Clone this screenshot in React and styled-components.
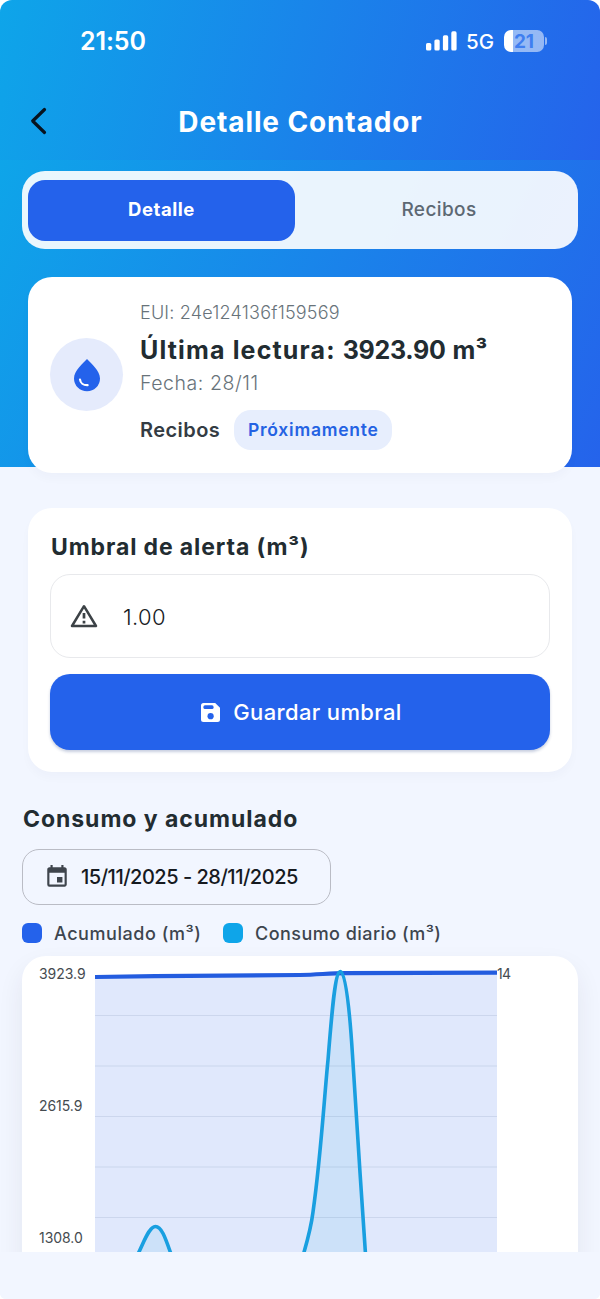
import React, { useState } from "react";
import styled, { createGlobalStyle } from "styled-components";
import { MdEvent } from "react-icons/md";

const GlobalStyle = createGlobalStyle`
  * {
    box-sizing: border-box;
  }
  body {
    margin: 0;
    background: #fff;
    font-family: Inter, "Open Sans", sans-serif;
  }
  button {
    font-family: inherit;
    cursor: pointer;
  }
`;
const Screen = styled.main`
  display: flex;
  flex-direction: column;
  width: 600px;
  height: 1299px;
  margin: 0 auto;
  border-radius: 12px 12px 6px 6px;
  background: #f2f6ff;
  overflow: hidden;
`;
const Header = styled.header`
  flex: none;
  height: 160px;
  background: linear-gradient(105deg, #0ea5e9 0%, #2563eb 100%);
`;
const StatusBar = styled.div`
  display: flex;
  align-items: center;
  height: 82px;
  padding: 0 53px 0 80px;
  color: #fff;
`;
const Time = styled.span`
  flex: 1;
  font-size: 25px;
  font-weight: 600;
  letter-spacing: -0.1px;
`;
const Signal = styled.svg`
  width: 31px;
  height: 20px;
  fill: #fff;
`;
const Network = styled.span`
  margin: 1px 10px 0 9px;
  font-size: 20.5px;
  font-weight: 500;
`;
const Battery = styled.div`
  display: flex;
  align-items: center;
  justify-content: center;
  width: 40px;
  height: 22px;
  border-radius: 7px;
  background: linear-gradient(
    90deg,
    #fff 9px,
    rgba(255, 255, 255, 0.52) 9px
  );
  color: #3f7ff0;
  font-size: 19px;
  font-weight: 700;
`;
const BatteryTip = styled.div`
  width: 2px;
  height: 8px;
  margin-left: 1px;
  border-radius: 0 3px 3px 0;
  background: rgba(255, 255, 255, 0.52);
`;
const TitleBar = styled.div`
  display: grid;
  grid-template-columns: 60px 1fr 60px;
  align-items: center;
  height: 78px;
`;
const Back = styled.button`
  display: flex;
  width: 18px;
  height: 28px;
  margin-left: 30px;
  padding: 0;
  border: 0;
  background: none;
  svg {
    width: 18px;
    height: 28px;
    fill: none;
    stroke: #07131f;
    stroke-width: 3.2;
    stroke-linecap: round;
    stroke-linejoin: round;
  }
`;
const Title = styled.h1`
  margin: 0;
  padding: 2px 0 0 1px;
  color: #fff;
  font-size: 28px;
  font-weight: 700;
  line-height: 40px;
  letter-spacing: 0.88px;
  text-align: center;
`;
const Body = styled.div`
  flex: 1;
  min-height: 0;
  overflow: hidden;
`;
const Hero = styled.section`
  height: 307px;
  padding: 11px 22px 0;
  background: linear-gradient(117deg, #0ea5e9 0%, #2563eb 100%);
`;
const Tabs = styled.div`
  display: flex;
  height: 78px;
  padding: 9px 6px 8px;
  border-radius: 23px;
  background: rgba(255, 255, 255, 0.91);
`;
const Tab = styled.button`
  flex: ${props => (props.$active ? "0 0 267px" : "1")};
  padding: ${props => (props.$active ? "0 0 3px" : "0 0 1px 11px")};
  border: 0;
  border-radius: 17px;
  background: ${props => (props.$active ? "#2462eb" : "transparent")};
  color: ${props => (props.$active ? "#fff" : "#5d6873")};
  font-size: ${props => (props.$active ? "18.5px" : "19px")};
  font-weight: ${props => (props.$active ? 700 : 500)};
  letter-spacing: ${props => (props.$active ? "0.55px" : "0.4px")};
  line-height: 24px;
`;
const Card = styled.section`
  margin: 0 28px;
  padding: 22px;
  border-radius: 24px;
  background: #fff;
  box-shadow: 0 6px 10px rgba(30, 40, 80, 0.025);
`;
const ReadingCard = styled(Card)`
  display: flex;
  height: 196px;
  margin: 28px 6px 0;
`;
const DropCircle = styled.div`
  display: flex;
  align-items: center;
  justify-content: center;
  flex: none;
  width: 73px;
  height: 73px;
  margin: 39px 17px 0 0;
  border-radius: 50%;
  background: #e5ebfc;
  svg {
    width: 28px;
    height: 34px;
  }
`;
const Info = styled.div`
  white-space: nowrap;
`;
const Eui = styled.div`
  color: #68737a;
  font-size: 18px;
  font-weight: 300;
  line-height: 27px;
  letter-spacing: 0.2px;
`;
const Reading = styled.div`
  padding-top: 1px;
  color: #222c31;
  font-size: 25px;
  font-weight: 700;
  line-height: 46px;
  letter-spacing: 1.15px;
`;
const Amount = styled.span`
  letter-spacing: -0.3px;
`;
const Unit = styled.span`
  letter-spacing: 0;
`;
const ReadingDate = styled.div`
  color: #68737a;
  font-size: 19.5px;
  font-weight: 300;
  line-height: 20px;
  letter-spacing: 0.55px;
`;
const Receipts = styled.div`
  display: flex;
  align-items: center;
  margin-top: 17px;
  color: #343c43;
  font-size: 20px;
  font-weight: 600;
  letter-spacing: 0.45px;
`;
const Badge = styled.span`
  width: 158px;
  margin-left: 14px;
  border-radius: 17px;
  background: #e7eefd;
  color: #2462e3;
  font-size: 17.5px;
  line-height: 40px;
  letter-spacing: 0.75px;
  text-align: center;
`;
const AlertCard = styled(Card)`
  margin-top: 41px;
`;
const Heading = styled.h2`
  margin: 0 0 0 1px;
  color: #222c31;
  font-size: 23px;
  font-weight: 700;
  line-height: 34px;
  letter-spacing: ${props => props.$spacing};
`;
const Field = styled.label`
  display: flex;
  align-items: center;
  height: 84px;
  margin-top: 10px;
  padding-left: 19px;
  border: 1px solid #e8e9ec;
  border-radius: 20px;
  svg {
    flex: none;
    width: 28px;
    height: 24px;
  }
`;
const Input = styled.input`
  width: 300px;
  margin-left: 25px;
  padding: 1px 0 0;
  border: 0;
  outline: 0;
  background: none;
  color: #161a1d;
  font-family: inherit;
  font-size: 22px;
  font-weight: 300;
  letter-spacing: 0.4px;
`;
const SaveButton = styled.button`
  display: flex;
  align-items: center;
  justify-content: center;
  width: 100%;
  height: 76px;
  margin-top: 16px;
  padding: 0 0 0 3px;
  border: 0;
  border-radius: 20px;
  background: #2462eb;
  box-shadow: 0 2px 3px rgba(20, 50, 120, 0.24);
  color: #fff;
  font-size: 22px;
  font-weight: 500;
  letter-spacing: 0.35px;
  svg {
    width: 19px;
    height: 19px;
    margin-right: 13px;
  }
`;
const Usage = styled.section`
  padding: 30px 22px 0;
`;
const RangeButton = styled.button`
  display: flex;
  align-items: center;
  width: 309px;
  height: 56px;
  margin-top: 13px;
  padding: 0 0 0 21px;
  border: 1.5px solid #babcc5;
  border-radius: 17px;
  background: transparent;
  color: #161a1f;
  font-size: 20px;
  font-weight: 500;
  letter-spacing: -0.49px;
  white-space: nowrap;
  svg {
    width: 26px;
    height: 26px;
    margin-right: 11px;
    color: #3f454d;
  }
`;
const Legend = styled.div`
  display: flex;
  height: 51px;
  padding-top: 18px;
`;
const LegendItem = styled.div`
  display: flex;
  align-items: center;
  width: ${props => props.$width};
  height: 20px;
  color: #3d454e;
  font-size: 18px;
  font-weight: 500;
  line-height: 21px;
  letter-spacing: ${props => props.$spacing};
  white-space: nowrap;
`;
const Swatch = styled.span`
  width: 20px;
  height: 20px;
  margin-right: 12px;
  border-radius: 6px;
  background: ${props => props.$color};
`;
const ChartCard = styled.div`
  display: flex;
  height: 340px;
  border-radius: 24px;
  background: #fff;
  box-shadow: 0 12px 26px rgba(50, 40, 60, 0.08);
  color: #454b50;
  font-size: 14px;
  line-height: 20px;
`;
const LeftAxis = styled.div`
  display: flex;
  flex-direction: column;
  gap: 112px;
  width: 73px;
  padding: 8px 0 0 17px;
  letter-spacing: -0.05px;
`;
const RightAxis = styled.div`
  padding-top: 8px;
  letter-spacing: -0.6px;
`;
const Plot = styled.svg`
  width: 402px;
  height: 296px;
`;
const BottomBar = styled.footer`
  flex: none;
  height: 47px;
  background: #f2f6ff;
`;

const leftTicks = ["3923.9", "2615.9", "1308.0"];
const gridLines = [59.5, 110, 160.5, 211, 261.5];
const series = [
  "M43 298 C49 286 54 270.5 60.5 270.5 C67 270.5 71 284 76 298",
  "M208.5 298 C212 286 216 272 218 256 C226 199 229 144 233 104 C237 54 240 15.5 245.5 15.5 C251 15.5 255 59 257.5 99 C261 154 266 234 270.5 298"
];

const Drop = () => (
  <svg viewBox="0 0 28 34">
    <path
      d="M14 1 C10 5.5 1 12.5 1 20.5 A13 12.8 0 0 0 27 20.5 C27 12.5 18 5.5 14 1Z"
      fill="#2462eb"
    />
    <path
      d="M7 21.5 C7.4 25 10.3 27.4 14.6 27.2"
      fill="none"
      stroke="#fff"
      strokeWidth="2.2"
      strokeLinecap="round"
    />
  </svg>
);

const Warning = () => (
  <svg viewBox="0 0 28 24" fill="none" stroke="#3c4246">
    <path
      d="M14 2.2 L26 22 H2 Z"
      strokeWidth="2.5"
      strokeLinejoin="round"
    />
    <path d="M14 9 V14.4 M14 16.8 V19.6" strokeWidth="2.7" />
  </svg>
);

const Floppy = () => (
  <svg viewBox="0 0 19 19">
    <path
      d="M2.5 0 H14.2 L19 4.8 V16.5 A2.5 2.5 0 0 1 16.5 19 H2.5 A2.5 2.5 0 0 1 0 16.5 V2.5 A2.5 2.5 0 0 1 2.5 0Z"
      fill="#fff"
    />
    <rect x="2.4" y="2.3" width="10.2" height="3.8" rx="1.6" fill="#2462eb" />
    <circle cx="9.6" cy="13.2" r="3.1" fill="#2462eb" />
  </svg>
);

const App = () => {
  const [tab, setTab] = useState("Detalle");
  const [threshold, setThreshold] = useState("1.00");
  return (
    <Screen>
      <GlobalStyle />
      <Header>
        <StatusBar>
          <Time>21:50</Time>
          <Signal viewBox="0 0 31 20">
            <rect x="0" y="12" width="5.3" height="7.5" rx="1.6" />
            <rect x="8.4" y="8.5" width="5.3" height="11" rx="1.6" />
            <rect x="16.9" y="4.3" width="5.3" height="15.2" rx="1.6" />
            <rect x="25.3" y="0.3" width="5.3" height="19.2" rx="1.6" />
          </Signal>
          <Network>5G</Network>
          <Battery>21</Battery>
          <BatteryTip />
        </StatusBar>
        <TitleBar>
          <Back aria-label="Volver">
            <svg viewBox="0 0 18 28">
              <path d="M14.5 2.5 L2.7 14 L14.5 25.5" />
            </svg>
          </Back>
          <Title>Detalle Contador</Title>
        </TitleBar>
      </Header>
      <Body>
        <Hero>
          <Tabs>
            {["Detalle", "Recibos"].map(name => (
              <Tab
                key={name}
                $active={tab === name}
                onClick={() => setTab(name)}
              >
                {name}
              </Tab>
            ))}
          </Tabs>
          <ReadingCard>
            <DropCircle>
              <Drop />
            </DropCircle>
            <Info>
              <Eui>EUI: 24e124136f159569</Eui>
              <Reading>
                Última lectura: <Amount>3923.90</Amount> <Unit>m³</Unit>
              </Reading>
              <ReadingDate>Fecha: 28/11</ReadingDate>
              <Receipts>
                Recibos
                <Badge>Próximamente</Badge>
              </Receipts>
            </Info>
          </ReadingCard>
        </Hero>
        <AlertCard>
          <Heading $spacing="0.88px">Umbral de alerta (m³)</Heading>
          <Field>
            <Warning />
            <Input
              value={threshold}
              onChange={e => setThreshold(e.target.value)}
            />
          </Field>
          <SaveButton>
            <Floppy />
            Guardar umbral
          </SaveButton>
        </AlertCard>
        <Usage>
          <Heading $spacing="0.95px">Consumo y acumulado</Heading>
          <RangeButton>
            <MdEvent />
            15/11/2025 - 28/11/2025
          </RangeButton>
          <Legend>
            <LegendItem $width="201px" $spacing="0.55px">
              <Swatch $color="#2462eb" />
              Acumulado (m³)
            </LegendItem>
            <LegendItem $spacing="0.45px">
              <Swatch $color="#0ea5e9" />
              Consumo diario (m³)
            </LegendItem>
          </Legend>
          <ChartCard>
            <LeftAxis>
              {leftTicks.map(tick => (
                <span key={tick}>{tick}</span>
              ))}
            </LeftAxis>
            <Plot viewBox="0 0 402 296">
              <path
                d="M0 21 L205 19 L245 17 L402 16.5 V296 H0 Z"
                fill="#e0e8fc"
              />
              {series.map(d => (
                <path key={d} d={d} fill="#cce1f9" />
              ))}
              {gridLines.map(y => (
                <path
                  key={y}
                  d={`M0 ${y} H402`}
                  stroke="#1e3a6e"
                  strokeOpacity="0.1"
                  strokeWidth="1.2"
                />
              ))}
              <path
                d="M0 21 L60 20.2 L205 19 C225 18.5 235 17.2 250 17.2 L402 16.6"
                fill="none"
                stroke="#235cdf"
                strokeWidth="4.2"
              />
              {series.map(d => (
                <path
                  key={d}
                  d={d}
                  fill="none"
                  stroke="#199fe0"
                  strokeWidth="3.6"
                />
              ))}
            </Plot>
            <RightAxis>14</RightAxis>
          </ChartCard>
        </Usage>
      </Body>
      <BottomBar />
    </Screen>
  );
};
export default App;
